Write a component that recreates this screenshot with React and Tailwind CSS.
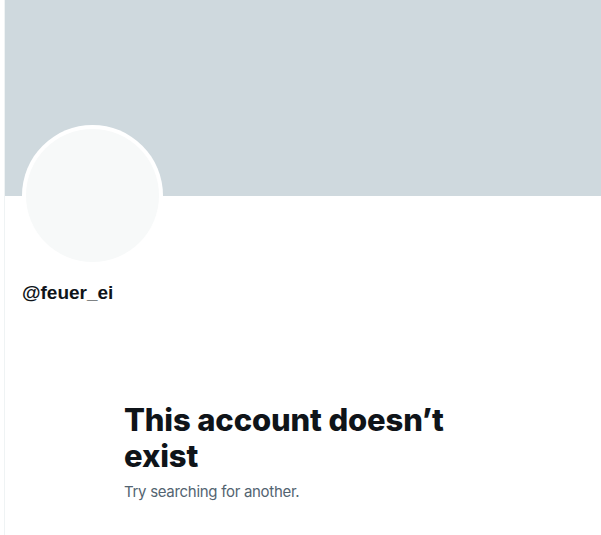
export default function App() {
  return (
    <div className="w-[601px] h-[535px] overflow-hidden bg-white" style={{ fontFamily: "Inter, 'Liberation Sans', sans-serif" }}>
      <div className="ml-[4px] h-full border-l border-[#eff3f4] flex flex-col">
        <div className="h-[196px] bg-[#cfd9de] shrink-0" />
        <div className="px-[17px]">
          <div className="-mt-[71px] w-[141px] h-[141px] rounded-full bg-white p-[4px]">
            <div className="w-full h-full rounded-full bg-[#f7f9f9]" />
          </div>
          <div className="mt-[15px] text-[19px] leading-[24px] font-bold text-[#0f1419] font-['Liberation_Sans',sans-serif]">@feuer_ei</div>
        </div>
        <div className="mt-[97px] ml-[119px] w-[336px]">
          <h1 className="text-[31px] leading-[36px] font-extrabold tracking-[-0.15px] text-[#0f1419]">This account doesn’t exist</h1>
          <p className="mt-[8px] text-[15px] leading-[20px] tracking-[-0.3px] text-[#536471]">Try searching for another.</p>
        </div>
      </div>
    </div>
  );
}
